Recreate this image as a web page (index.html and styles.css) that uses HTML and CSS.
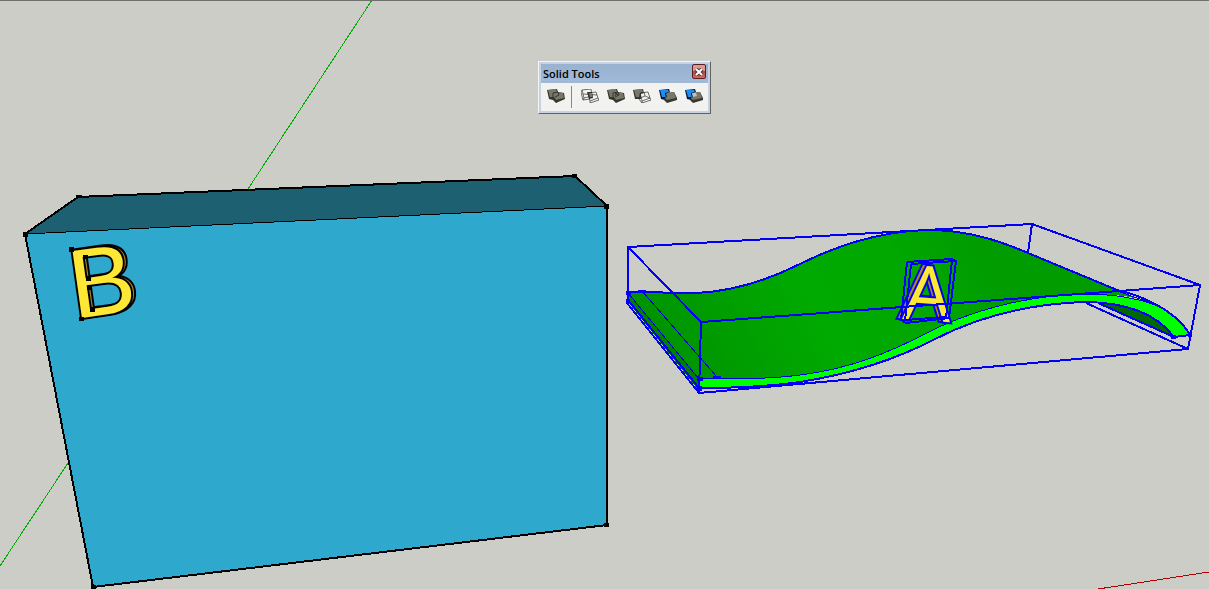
FILE: index.html
```html
<!DOCTYPE html>
<html lang="en">
<head>
<meta charset="utf-8">
<title>Solid Tools</title>
<link rel="stylesheet" href="styles.css">
</head>
<body>
<main class="viewport">
  <svg class="scene" viewBox="0 0 1209 589" role="img" aria-label="Model view with solids A and B">
    <defs>
      <linearGradient id="wave" gradientUnits="userSpaceOnUse" x1="690" y1="380" x2="970" y2="230">
        <stop offset="0" stop-color="#009500"/>
        <stop offset=".45" stop-color="#00aa00"/>
        <stop offset=".75" stop-color="#00a800"/>
        <stop offset="1" stop-color="#009c00"/>
      </linearGradient>
    </defs>
    <path class="axis-green" d="M372 0L248 189M68 463L0 566"/>
    <path class="axis-red" d="M1098 589L1209 572"/>

    <!-- box B -->
    <path class="box-top" d="M25 234L78 197L575 176L607 206Z"/>
    <path class="box-front" d="M25 234L607 206L607 525L93 587Z"/>
    <path class="box-edge-thin" d="M25 234L607 206"/>
    <path class="box-edge" d="M25 234L78 197L575 176L607 206L607 525L93 587Z"/>
    <path class="box-corner" d="M23 232h5v5h-5zM76 195h6v3h-6zM572 174h5v4h-5zM604 204h5v5h-5zM604 523h5v4h-5zM91 585h5v4h-5z"/>
    <g transform="translate(77 318) rotate(-8)">
      <use class="letter-shade" href="#letter-b"/>
    </g>
    <g transform="translate(74 319) rotate(-8)">
      <text id="letter-b" class="letter letter-b">B</text>
    </g>
    <path class="letter-node" d="M69 247h5v5h-5zM83 255h5v4h-5zM86 277h5v4h-5zM87 286h5v4h-5zM90 308h5v4h-5zM79 317h5v4h-5z"/>

    <!-- wave solid A -->
    <path class="wave-side" d="M628 292L699 379V391L628 302Z"/>
    <path class="wave-top" d="M628 292L697 293C735 291 770 279 800 264C840 244 884 230 933 230C970 231 1000 241 1028 253L1140 299C1120 294 1100 294 1083 294C1020 296 965 313 925 334C890 352 850 369 800 375C770 379 740 379 699 379Z"/>
    <path class="wave-under" d="M1098 303L1174 337C1160 318 1136 307 1098 303Z"/>
    <path class="wave-front" d="M699 379C740 379 770 379 800 375C850 369 890 352 925 334C965 313 1020 296 1083 294C1115 294 1140 299 1158 306C1173 313 1184 323 1190 335L1174 337C1160 318 1134 302 1083 302C1030 304 980 316 935 339C893 361 850 374 800 382C765 387 730 388 699 388Z"/>
    <path class="blue-thin" d="M699 379C740 379 770 379 800 375C850 369 890 352 925 334C965 313 1020 296 1083 294C1115 294 1140 299 1158 306M628 293L699 379M642 291L717 377M1117 291L1160 306"/>
    <path class="blue" d="M628 292L697 293C735 291 770 279 800 264C840 244 884 230 933 230C970 231 1000 241 1028 253L1117 290C1140 295 1176 310 1190 335L1174 337C1160 318 1134 302 1083 302C1030 304 980 316 935 339C893 361 850 374 800 382C765 387 730 388 699 388L628 300M1098 303L1174 337"/>
    <path class="blue" d="M628 302V247L1032 224L1200 285L1188 349L699 393L627 303M628 247L701 322L699 393M701 322L1200 285M1032 224L1028 253M1086 303L1188 349"/>
    <path class="blue-node" d="M626 291h5v4h-5zM638 290h8v2h-8zM626 299h4v4h-4zM697 377h6v4h-6zM713 376h8v3h-8zM697 386h5v5h-5zM1171 335h5v4h-5zM1188 333h4v4h-4z"/>
    <g transform="translate(898 318) rotate(4)">
      <use class="letter-shade" href="#letter-a"/>
    </g>
    <g transform="translate(902 319) rotate(4)">
      <text id="letter-a" class="letter letter-a">A</text>
    </g>
    <path class="blue" d="M907 262L952 259L956 261L949 318L906 323L901 320L907 262M911 264L956 261M911 264L905 321M952 260L946 318M905 320L946 317M847 311L957 303"/>
  </svg>

  <section class="palette" aria-label="Solid Tools">
    <header class="palette-title">
      <h1>Solid Tools</h1>
      <button class="close" aria-label="Close"><svg viewBox="0 0 10 8"><path class="x-edge" d="M2 1L8 7M8 1L2 7"/><path class="x-mark" d="M2 1L8 7M8 1L2 7"/></svg></button>
    </header>
    <div class="tools">
      <button aria-label="Outer Shell"><svg viewBox="0 0 18 14"><path class="dark" d="M0 1L10 0L11 3L17 4L18 10L9 14L6 11L2 10Z"/><path class="stone" d="M1 1L9 0L10 3L16 4L17 9L9 11L7 8L3 8Z"/><path class="line" d="M6 8V4L11 3L12 6L8 8"/></svg></button>
      <span class="divider"></span>
      <button aria-label="Intersect"><svg viewBox="0 0 18 14"><path class="wire" d="M1 1L10 0L11 7L3 9ZM1 1L0 3L2 11L3 9M2 11L9 10M7 4L15 3L17 9L9 12L7 4M9 12V14L18 11L17 9M2 5L16 6"/><path class="dark" d="M6 3L11 3L12 9L8 10Z"/><path class="stone" d="M8 4L11 4L11 8L9 8Z"/></svg></button>
      <button aria-label="Union"><svg viewBox="0 0 18 14"><path class="dark" d="M0 1L10 0L11 3L17 4L18 10L9 14L6 11L2 10Z"/><path class="stone" d="M1 1L9 0L10 3L16 4L17 9L9 11L7 8L3 8Z"/><path class="line" d="M6 8V4L11 3L12 6L8 8M8 4L11 6M10 4L8 7"/></svg></button>
      <button aria-label="Subtract"><svg viewBox="0 0 18 14"><path class="dark" d="M0 1L10 0L11 4L8 5L8 10L2 10Z"/><path class="stone" d="M1 1L9 0L10 3L7 4L6 8L3 8Z"/><path class="wire" d="M7 4L15 3L17 9L9 12L7 4M9 12V14L18 11L17 9M7 9L12 7L17 9M12 7L11 3M6 10L9 14"/></svg></button>
      <button aria-label="Trim"><svg viewBox="0 0 18 14"><path class="navy" d="M0 1L10 0L11 3L7 5L6 11L2 10Z"/><path class="azure" d="M1 1L9 1L10 3L6 4L6 8L3 8Z"/><path class="dark" d="M8 4L15 3L18 9V11L8 14L5 11Z"/><path class="stone" d="M8 4L15 3L17 9L8 11L6 9L8 8Z"/></svg></button>
      <button aria-label="Split"><svg viewBox="0 0 18 14"><path class="navy" d="M0 1L10 0L11 3L7 5L6 11L2 10Z"/><path class="azure" d="M1 1L9 1L10 3L6 4L6 8L3 8Z"/><path class="dark" d="M8 4L15 3L18 9V11L8 14L5 11Z"/><path class="stone" d="M8 4L15 3L17 9L8 11L6 9L8 8Z"/><path class="pale" d="M7 4L11 4L12 7L8 8Z"/></svg></button>
    </div>
  </section>
</main>
</body>
</html>
```
FILE: styles.css
```css
body {
  margin: 0;
  background: #cdcdc8;
  font-family: "Open Sans", "Noto Sans", sans-serif;
}
.viewport {
  position: relative;
  min-height: 100vh;
  overflow: hidden;
}
.viewport::before {
  content: "";
  position: absolute;
  inset: 0 0 auto;
  border-top: 1px solid #70706e;
}
.scene {
  display: block;
  width: 100%;
  shape-rendering: crispEdges;
}
.scene path { fill: none; }
.axis-green { stroke: #00ad00; }
.axis-red { stroke: #b40000; }
.scene .box-top { fill: #1c6072; }
.scene .box-front { fill: #2fa8cd; }
.box-edge { stroke: #000; stroke-width: 2; }
.box-edge-thin { stroke: #000; }
.scene .box-corner,
.scene .letter-node { fill: #000; }
.scene .wave-side { fill: #008000; }
.scene .wave-top { fill: url(#wave); }
.scene .wave-under { fill: #006800; }
.scene .wave-front { fill: #00ff00; }
.blue { stroke: #0000f5; stroke-width: 2; }
.blue-thin { stroke: #0000d8; }
.scene .blue-node { fill: #0000f5; }
.scene { --letter-fill: #ffe835; }
.letter {
  fill: var(--letter-fill);
  paint-order: stroke;
}
.letter-b {
  font-family: "Liberation Sans", Arial, sans-serif;
  font-size: 98px;
  stroke: #000;
  stroke-width: 4px;
}
.letter-a {
  font-family: "Open Sans", sans-serif;
  font-size: 76px;
  stroke: #0000f5;
  stroke-width: 4px;
}
.scene .letter-shade { --letter-fill: #ac8524; }

.palette {
  position: absolute;
  top: 61px;
  left: 538px;
  padding: 2px;
  border: 1px solid;
  border-color: #f5f5f2 #62625f #62625f #f5f5f2;
  background: #c4d2e2;
}
.palette-title {
  display: flex;
  align-items: flex-start;
  justify-content: space-between;
  height: 19px;
  padding: 0 2px;
  background: linear-gradient(#98b2d0, #a0bad8);
}
.palette-title h1 {
  margin: 0;
  font-size: 11px;
  line-height: 20px;
  font-weight: 600;
  color: #000;
}
.close {
  display: flex;
  align-items: center;
  justify-content: center;
  width: 14px;
  height: 15px;
  padding: 0;
  border: 1px solid #591f24;
  border-radius: 2px;
  background: linear-gradient(#dc9a91 45%, #bd4638 50%, #cc6e5e);
}
.close svg { flex: none; width: 10px; height: 8px; }
.x-edge { stroke: #4d3436; stroke-width: 4; }
.x-mark { stroke: #fff; stroke-width: 2; }
.tools {
  display: flex;
  align-items: center;
  height: 28px;
  padding: 0 1px 0 2px;
  background: #f2f2f1;
}
.tools button {
  display: flex;
  align-items: center;
  justify-content: center;
  width: 26px;
  height: 26px;
  padding: 0 0 2px;
  border: 0;
  background: none;
}
.tools svg { width: 18px; height: 14px; }
.divider {
  width: 1px;
  height: 22px;
  margin: 0 5px 0 2px;
  background: #888;
}
.stone { fill: #77776a; }
.dark { fill: #36362f; }
.line { fill: none; stroke: #24241f; stroke-width: .8; }
.wire { fill: none; stroke: #33332f; stroke-width: .7; }
.azure { fill: #1c8df2; }
.navy { fill: #06172c; }
.pale { fill: #bfc0c8; }
```
